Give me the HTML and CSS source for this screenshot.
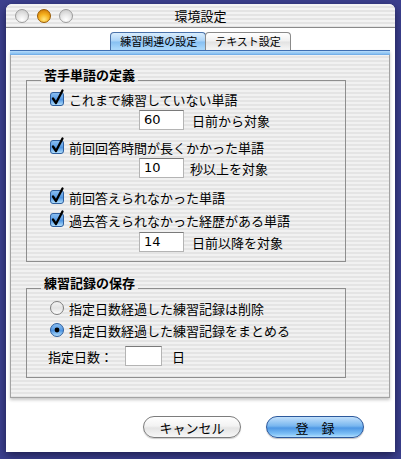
FILE: index.html
```html
<!DOCTYPE html>
<html lang="ja">
<head>
<meta charset="utf-8">
<title>環境設定</title>
<link rel="stylesheet" href="styles.css">
</head>
<body>
<svg class="defs" width="0" height="0" aria-hidden="true">
  <defs>
    <linearGradient id="aquaBlue" x1="0" y1="0" x2="0" y2="1">
      <stop offset="0" stop-color="#8cc0f2"/>
      <stop offset="0.45" stop-color="#5d9fe6"/>
      <stop offset="0.55" stop-color="#4e95e2"/>
      <stop offset="1" stop-color="#b9e4ff"/>
    </linearGradient>
    <linearGradient id="aquaGrey" x1="0" y1="0" x2="0" y2="1">
      <stop offset="0" stop-color="#f4f4f4"/>
      <stop offset="0.5" stop-color="#e2e2e2"/>
      <stop offset="1" stop-color="#ffffff"/>
    </linearGradient>
  </defs>
</svg>
<div class="window">
  <div class="titlebar">
    <div class="lights">
      <span class="light"></span>
      <span class="light light-min"></span>
      <span class="light"></span>
    </div>
    <div class="title">環境設定</div>
    <div></div>
  </div>

  <div class="tabs">
    <div class="tab tab-active">練習関連の設定</div>
    <div class="tab tab-plain">テキスト設定</div>
  </div>

  <div class="pane">
    <div class="pane-band"></div>
    <div class="pane-body">
      <section class="group">
        <div class="group-head"><span class="seg seg-short"></span><span class="group-title">苦手単語の定義</span><span class="seg seg-long"></span></div>
        <div class="group-body body-1">
          <div class="row row-check">
            <svg class="checkbox" width="14" height="14" viewBox="0 0 14 14"><rect x="0.5" y="0.5" width="13" height="13" rx="2.5" fill="url(#aquaBlue)" stroke="#2f5f9e"/><path d="M3 6.5 L6 11 L12.5 -1.5" fill="none" stroke="#000" stroke-width="2.3" stroke-linecap="round" stroke-linejoin="round"/></svg>
            <span class="label">これまで練習していない単語</span>
          </div>
          <div class="row row-input gap-1">
            <span class="field">60</span><span class="after">日前から対象</span>
          </div>
          <div class="row row-check gap-7">
            <svg class="checkbox" width="14" height="14" viewBox="0 0 14 14"><rect x="0.5" y="0.5" width="13" height="13" rx="2.5" fill="url(#aquaBlue)" stroke="#2f5f9e"/><path d="M3 6.5 L6 11 L12.5 -1.5" fill="none" stroke="#000" stroke-width="2.3" stroke-linecap="round" stroke-linejoin="round"/></svg>
            <span class="label">前回回答時間が長くかかった単語</span>
          </div>
          <div class="row row-input gap-1">
            <span class="field">10</span><span class="after after-s">秒以上を対象</span>
          </div>
          <div class="row row-check gap-9">
            <svg class="checkbox" width="14" height="14" viewBox="0 0 14 14"><rect x="0.5" y="0.5" width="13" height="13" rx="2.5" fill="url(#aquaBlue)" stroke="#2f5f9e"/><path d="M3 6.5 L6 11 L12.5 -1.5" fill="none" stroke="#000" stroke-width="2.3" stroke-linecap="round" stroke-linejoin="round"/></svg>
            <span class="label">前回答えられなかった単語</span>
          </div>
          <div class="row row-check gap-3">
            <svg class="checkbox" width="14" height="14" viewBox="0 0 14 14"><rect x="0.5" y="0.5" width="13" height="13" rx="2.5" fill="url(#aquaBlue)" stroke="#2f5f9e"/><path d="M3 6.5 L6 11 L12.5 -1.5" fill="none" stroke="#000" stroke-width="2.3" stroke-linecap="round" stroke-linejoin="round"/></svg>
            <span class="label">過去答えられなかった経歴がある単語</span>
          </div>
          <div class="row row-input gap-2">
            <span class="field">14</span><span class="after">日前以降を対象</span>
          </div>
        </div>
      </section>

      <section class="group group-2">
        <div class="group-head"><span class="seg seg-short"></span><span class="group-title">練習記録の保存</span><span class="seg seg-long"></span></div>
        <div class="group-body body-2">
          <div class="row row-check">
            <svg class="radio" width="14" height="14" viewBox="0 0 14 14"><circle cx="7" cy="7" r="6.5" fill="url(#aquaGrey)" stroke="#7d7d7d"/></svg>
            <span class="label">指定日数経過した練習記録は削除</span>
          </div>
          <div class="row row-check gap-2">
            <svg class="radio" width="14" height="14" viewBox="0 0 14 14"><circle cx="7" cy="7" r="6.5" fill="url(#aquaBlue)" stroke="#2f5f9e"/><circle cx="7" cy="7" r="2.4" fill="#000"/></svg>
            <span class="label">指定日数経過した練習記録をまとめる</span>
          </div>
          <div class="row row-days gap-6">
            <span class="days-label">指定日数：</span><span class="field field-days"></span><span class="after after-d">日</span>
          </div>
        </div>
      </section>
    </div>
  </div>

  <div class="buttons">
    <div class="btn btn-cancel">キャンセル</div>
    <div class="btn btn-ok">登　録</div>
  </div>
</div>
</body>
</html>
```

FILE: styles.css
```css
html, body {
  margin: 0;
  padding: 0;
}

body {
  width: 401px;
  height: 459px;
  overflow: hidden;
  background: #3c408f;
  font-family: "Noto Sans CJK JP", "Noto Sans", sans-serif;
  color: #000;
}

.defs {
  display: block;
  width: 0;
  height: 0;
}

.window {
  margin: 4px 0 0 6px;
  width: 389px;
  height: 448px;
  background: #ffffff;
  border-radius: 6px 6px 0 0;
  box-shadow: 0 3px 10px rgba(0, 0, 20, 0.55);
  display: flex;
  flex-direction: column;
}

/* title bar */
.titlebar {
  height: 23px;
  border-bottom: 1px solid #8a8a8a;
  border-radius: 6px 6px 0 0;
  background: repeating-linear-gradient(to bottom, #f3f3f3 0 2px, #e4e4e4 2px 4px);
  display: grid;
  grid-template-columns: 1fr auto 1fr;
  align-items: center;
  padding: 0 9px;
}

.lights {
  display: flex;
  gap: 8px;
  align-items: center;
}

.light {
  width: 14px;
  height: 14px;
  box-sizing: border-box;
  border-radius: 50%;
  border: 1px solid #9c9c9c;
  background: radial-gradient(circle at 50% 80%, #ffffff 0, #e8e8e8 45%, #c4c4c4 100%);
}

.light-min {
  border-color: #9a5a00;
  background: radial-gradient(circle at 50% 78%, #ffe680 0, #f7b320 45%, #c86e00 100%);
}

.title {
  font-size: 13px;
  line-height: 14px;
}

/* tabs */
.tabs {
  display: flex;
  justify-content: center;
  margin-top: 4px;
  height: 18px;
}

.tab {
  height: 18px;
  box-sizing: border-box;
  font-size: 11px;
  line-height: 17px;
  border: 1px solid #8a8a8a;
  border-bottom: none;
  border-radius: 4px 4px 0 0;
  white-space: nowrap;
}

.tab-active {
  padding: 0 8px 0 9px;
  border-color: #4a72aa;
  background: linear-gradient(to bottom, #d9edfd 0%, #a9d2f7 48%, #86bff2 52%, #aedafc 100%);
}

.tab-plain {
  padding: 0 9px;
  margin-left: -1px;
  background: linear-gradient(to bottom, #ffffff 0%, #f0f0f0 48%, #e2e2e2 52%, #f6f6f6 100%);
}

/* pane */
.pane {
  margin: 0 5px 0 4px;
  height: 348px;
  box-sizing: border-box;
  border: 1px solid #a3a3a3;
  border-top: none;
  background: repeating-linear-gradient(to bottom, #f1f1f1 0 2px, #e4e4e4 2px 4px);
  box-shadow: 0 2px 3px rgba(0, 0, 0, 0.22);
}

.pane-band {
  height: 5px;
  margin: 0 -1px;
  background: linear-gradient(to bottom, #3f6fb2 0 1px, #b8dcfb 1px, #8cc3f2 70%, #6aa6e4 100%);
}

.pane-body {
  padding: 13px 0 0 15px;
}

/* group boxes */
.group {
  width: 320px;
}

.group-2 {
  margin-top: 14px;
}

.group-head {
  display: flex;
  align-items: flex-end;
  height: 13px;
}

.seg {
  height: 0;
  border-bottom: 1px solid #8e8e8e;
}

.seg-short {
  width: 15px;
}

.seg-long {
  flex: 1;
}

.group-title {
  font-size: 13px;
  font-weight: bold;
  line-height: 13px;
  padding: 0 3px;
  white-space: nowrap;
}

.group-body {
  border: 1px solid #8e8e8e;
  border-top: none;
}

.body-1 {
  padding: 8px 0 9px;
}

.body-2 {
  padding: 9px 0 11px;
}

.row {
  display: flex;
  align-items: center;
  height: 20px;
  font-size: 13px;
  white-space: nowrap;
}

.gap-1 { margin-top: 1px; }
.gap-2 { margin-top: 2px; }
.gap-3 { margin-top: 3px; }
.gap-6 { margin-top: 6px; }
.gap-7 { margin-top: 7px; }
.gap-9 { margin-top: 9px; }

.row-check {
  padding-left: 23px;
}

.checkbox,
.radio {
  flex: none;
  overflow: visible;
  margin-right: 5px;
}

.row-input {
  padding-left: 112px;
}

.field {
  width: 45px;
  height: 20px;
  box-sizing: border-box;
  background: #ffffff;
  border: 1px solid #b4b4b4;
  border-top-color: #7a7a7a;
  font-family: "DejaVu Sans", sans-serif;
  font-size: 13px;
  line-height: 18px;
  padding-left: 4px;
}

.after {
  margin-left: 8px;
}

.after-s {
  margin-left: 6px;
}

.row-days {
  padding-left: 21px;
}

.days-label {
  width: 77px;
}

.field-days {
  width: 37px;
}

.after-d {
  margin-left: 10px;
}

/* buttons */
.buttons {
  display: flex;
  justify-content: flex-end;
  gap: 25px;
  padding-right: 31px;
  margin-top: 18px;
}

.btn {
  width: 98px;
  height: 22px;
  box-sizing: border-box;
  border-radius: 11px;
  font-size: 13px;
  display: flex;
  align-items: center;
  justify-content: center;
  white-space: nowrap;
}

.btn-cancel {
  border: 1px solid #7c7c7c;
  background: linear-gradient(to bottom, #ffffff 0%, #f2f2f2 45%, #e4e4e4 55%, #f7f7f7 100%);
  box-shadow: 0 1px 1px rgba(0, 0, 0, 0.2);
}

.btn-ok {
  border: 1px solid #2c589c;
  background: linear-gradient(to bottom, #c2e0fb 0%, #78b6ef 45%, #4e97e4 55%, #7fc1f6 85%, #b2dffe 100%);
  box-shadow: 0 1px 1px rgba(0, 0, 0, 0.25);
}
```
